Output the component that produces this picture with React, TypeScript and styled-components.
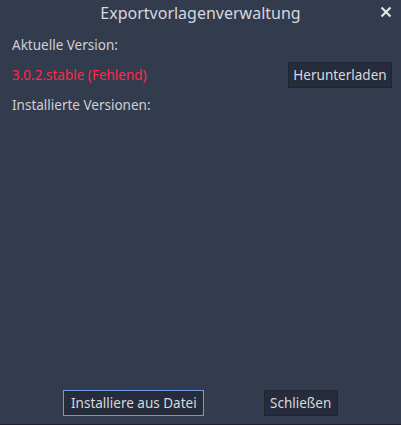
import React from "react";
import styled, { createGlobalStyle } from "styled-components";

const Global = createGlobalStyle`
  html, body { margin: 0; padding: 0; background: #333b4f; }
  body { font-family: "Noto Sans", "Open Sans", sans-serif; }
`;

const Dialog = styled.div`
  width: 401px;
  height: 425px;
  box-sizing: border-box;
  background: #333b4f;
  border-bottom: 1px solid #1c212c;
  display: flex;
  flex-direction: column;
  color: #d2d4d8;
`;

const TitleBar = styled.div`
  position: relative;
  height: 26px;
  box-sizing: border-box;
  padding-top: 3px;
  text-align: center;
  font-size: 16px;
  line-height: 20px;
  color: #d6d8dc;
`;

const CloseIcon = styled.svg`
  position: absolute;
  right: 9px;
  top: 6px;
`;

const Content = styled.div`
  flex: 1;
  display: flex;
  flex-direction: column;
  gap: 7px;
  padding: 9px 9px 0 12px;
`;

const Label = styled.div<{ $error?: boolean }>`
  font-size: 13.5px;
  line-height: 20px;
  color: ${(p) => (p.$error ? "#ff2a48" : "#cfd1d5")};
`;

const Row = styled.div`
  display: flex;
  align-items: center;
  justify-content: space-between;
  height: 26px;
`;

const Button = styled.button<{ $focused?: boolean; $w: number }>`
  width: ${(p) => p.$w}px;
  height: 26px;
  box-sizing: border-box;
  padding: 0;
  text-align: center;
  font-family: inherit;
  font-size: 13.5px;
  line-height: 20px;
  color: #d8dadd;
  background: #262c3b;
  border: 1px solid ${(p) => (p.$focused ? "#6b9be6" : "#20252f")};
  border-radius: 0;
`;

const Footer = styled.div`
  display: flex;
  justify-content: space-evenly;
  padding: 0 4px 8px 4px;
`;

export default function App() {
  return (
    <>
      <Global />
      <Dialog>
        <TitleBar>
          Exportvorlagenverwaltung
          <CloseIcon width="12" height="12" viewBox="0 0 12 12">
            <path d="M1.5 1.5 L10.5 10.5 M10.5 1.5 L1.5 10.5" stroke="#e4e5e8" strokeWidth="2.2" />
          </CloseIcon>
        </TitleBar>
        <Content>
          <Label>Aktuelle Version:</Label>
          <Row>
            <Label $error>3.0.2.stable (Fehlend)</Label>
            <Button $w={104}>Herunterladen</Button>
          </Row>
          <Label>Installierte Versionen:</Label>
        </Content>
        <Footer>
          <Button $focused $w={141}>Installiere aus Datei</Button>
          <Button $w={74}>Schließen</Button>
        </Footer>
      </Dialog>
    </>
  );
}
